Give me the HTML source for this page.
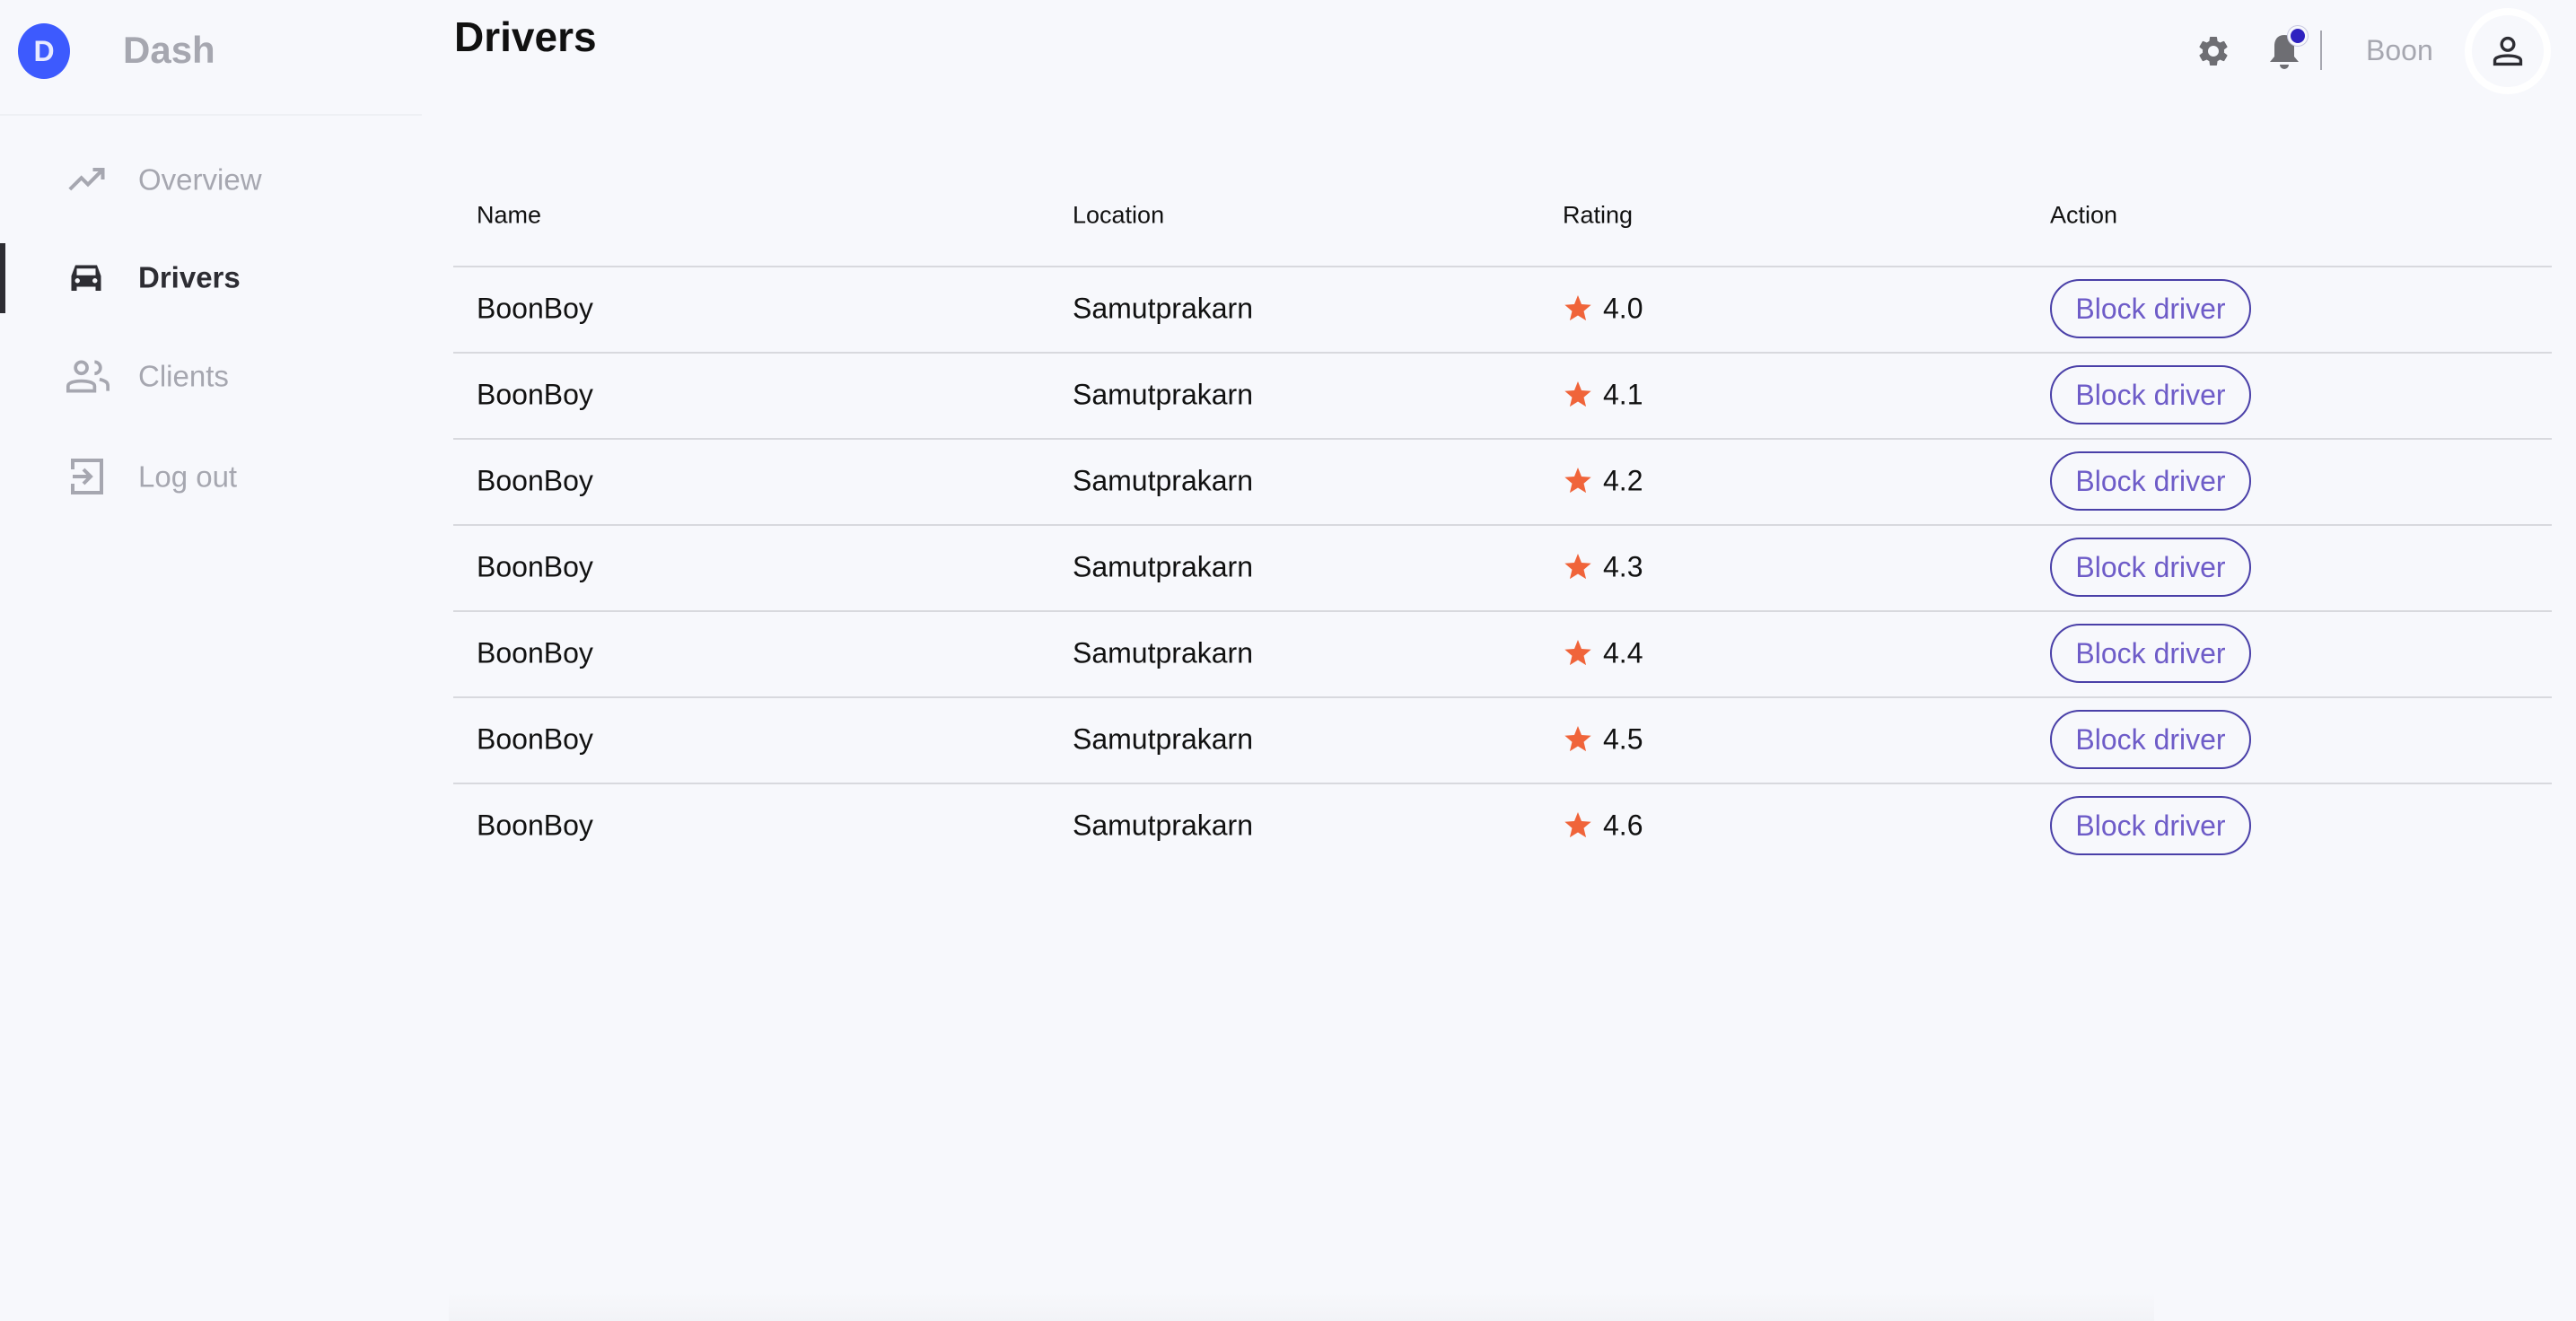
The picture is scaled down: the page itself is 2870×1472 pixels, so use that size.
<!DOCTYPE html>
<html><head><meta charset="utf-8"><style>
*{margin:0;padding:0;box-sizing:border-box}
body{width:2870px;height:1472px;background:#f7f8fc;font-family:"Liberation Sans",sans-serif;position:relative;overflow:hidden;color:#111}
.abs{position:absolute}
.nav{position:absolute;left:154px;font-size:33px;color:#a6a7b0;line-height:1;transform:translateY(-50%)}
.ic{position:absolute;left:76px;transform:translateY(-50%)}
.h{position:absolute;top:240px;font-size:27px;transform:translateY(-50%);color:#111}
.line{position:absolute;left:505px;width:2338px;height:2px;background:#d8d9de}
.cell{position:absolute;font-size:32px;transform:translateY(-50%);color:#111}
.btn{position:absolute;left:2284px;width:224px;height:66px;border:2px solid #4a40a8;border-radius:33px;color:#6e5cc8;font-size:32px;display:flex;align-items:center;justify-content:center;transform:translateY(-50%)}
.star{position:absolute;left:1742px;transform:translateY(-50%)}
</style></head><body>
<div class="abs" style="left:20px;top:26px;width:58px;height:62px;border-radius:50%;background:#3d5afe"></div>
<div class="abs" style="left:20px;top:26px;width:58px;height:62px;color:#e8eaff;font-weight:bold;font-size:32px;display:flex;align-items:center;justify-content:center">D</div>
<div class="abs" style="left:137px;top:32px;font-size:42px;font-weight:bold;color:#a6a7b0">Dash</div>
<div class="abs" style="left:0;top:127px;width:470px;height:2px;background:#eef0f4"></div>

<svg class="ic" style="top:200px" width="44" height="30" viewBox="0 0 24 16"><path d="M1 14 L8 7 L12 11 L20 3 M15 2 H21 V8" stroke="#a6a7b0" stroke-width="2.2" fill="none"/></svg>
<div class="nav" style="top:200px">Overview</div>

<div class="abs" style="left:0;top:271px;width:6px;height:78px;background:#2d2d33"></div>
<svg class="ic" style="left:78px;top:309px" width="36" height="34" viewBox="0 0 24 22"><path d="M4 2 H20 L23 10 V21 H19 V18 H5 V21 H1 V10 Z" fill="#2d2d33"/><rect x="5" y="4.5" width="14" height="5" fill="#f7f8fc"/><circle cx="5.5" cy="13.5" r="1.8" fill="#f7f8fc"/><circle cx="18.5" cy="13.5" r="1.8" fill="#f7f8fc"/></svg>
<div class="nav" style="top:309px;color:#2d2d33;font-weight:bold">Drivers</div>

<svg class="ic" style="left:74px;top:419px" width="48" height="38" viewBox="0 0 26 20"><circle cx="9" cy="5" r="3.5" stroke="#a6a7b0" stroke-width="2" fill="none"/><path d="M17 1.5 A3.5 3.5 0 0 1 17 8.5" stroke="#a6a7b0" stroke-width="2" fill="none"/><path d="M1 19 V16 C1 12 17 12 17 16 V19 Z" stroke="#a6a7b0" stroke-width="2" fill="none"/><path d="M20 12 C24 13 25 14 25 16 V19" stroke="#a6a7b0" stroke-width="2" fill="none"/></svg>
<div class="nav" style="top:419px">Clients</div>

<svg class="ic" style="left:79px;top:531px" width="36" height="40" viewBox="0 0 18 20"><path d="M1 6 V1 H17 V19 H1 V14" stroke="#a6a7b0" stroke-width="2" fill="none"/><path d="M1 10 H11 M7 6 L11 10 L7 14" stroke="#a6a7b0" stroke-width="2" fill="none"/></svg>
<div class="nav" style="top:531px">Log out</div>

<div class="abs" style="left:506px;top:14px;font-size:46px;font-weight:bold;color:#111">Drivers</div>

<svg class="abs" style="left:2446px;top:37px" width="40" height="40" viewBox="0 0 24 24"><path fill="#6e6e73" d="M19.14 12.94c.04-.3.06-.61.06-.94 0-.32-.02-.64-.07-.94l2.030-1.58a.49.49 0 0 0 .12-.61l-1.92-3.32a.488.488 0 0 0-.59-.22l-2.39.96c-.5-.38-1.03-.7-1.62-.94l-.36-2.54a.484.484 0 0 0-.48-.41h-3.84c-.24 0-.43.17-.47.41l-.36 2.54c-.59.24-1.130.57-1.62.94l-2.39-.96c-.22-.08-.47 0-.59.22L2.74 8.87c-.12.21-.08.47.12.61l2.03 1.58c-.05.3-.09.63-.09.94s.02.64.07.94l-2.03 1.58a.49.49 0 0 0-.12.61l1.92 3.32c.12.22.37.29.59.22l2.39-.96c.5.38 1.03.7 1.62.94l.36 2.54c.05.24.24.41.48.41h3.84c.24 0 .44-.17.47-.41l.36-2.54c.59-.24 1.13-.56 1.62-.94l2.39.96c.22.08.47 0 .59-.22l1.92-3.32c.12-.22.07-.47-.12-.61l-2.01-1.58zM12 15.6c-1.98 0-3.6-1.62-3.6-3.6s1.62-3.6 3.6-3.6 3.6 1.62 3.6 3.6-1.62 3.6-3.6 3.6z"/></svg>
<svg class="abs" style="left:2527px;top:37px" width="36" height="40" viewBox="0 0 18 20"><path d="M9 1 C5 1 3.5 4 3.5 7 V13 L1 16 H17 L14.5 13 V7 C14.5 4 13 1 9 1 Z" fill="#6e6e73"/><path d="M6.5 17.5 H11.5 A2.5 2.5 0 0 1 6.5 17.5 Z" fill="#6e6e73"/></svg>
<div class="abs" style="left:2549px;top:29px;width:22px;height:22px;border-radius:50%;background:#2f22c0;border:3px solid #f7f8fc;box-shadow:0 0 0 1px #c8c8e0"></div>
<div class="abs" style="left:2585px;top:34px;width:2px;height:44px;background:#a6a7b0"></div>
<div class="abs" style="left:2636px;top:38px;font-size:32px;color:#a6a7b0">Boon</div>
<div class="abs" style="left:2746px;top:9px;width:96px;height:96px;border-radius:50%;border:8px solid #fff"></div>
<svg class="abs" style="left:2777px;top:40px" width="34" height="34" viewBox="0 0 20 20"><circle cx="10" cy="5.5" r="4" stroke="#2d2d33" stroke-width="2" fill="none"/><path d="M1.5 18.5 V16 C1.5 12 18.5 12 18.5 16 V18.5 Z" stroke="#2d2d33" stroke-width="2" fill="none"/></svg>

<div class="h" style="left:531px">Name</div>
<div class="h" style="left:1195px">Location</div>
<div class="h" style="left:1741px">Rating</div>
<div class="h" style="left:2284px">Action</div>
<div class="line" style="top:296px"></div>

<div class="line" style="top:392px"></div>
<div class="line" style="top:488px"></div>
<div class="line" style="top:584px"></div>
<div class="line" style="top:680px"></div>
<div class="line" style="top:776px"></div>
<div class="line" style="top:872px"></div>

<div class="cell" style="left:531px;top:344px">BoonBoy</div><div class="cell" style="left:1195px;top:344px">Samutprakarn</div><svg class="star" style="top:343px" width="32" height="32" viewBox="0 0 24 24"><path d="M12 1.5l3 7.5 8 .6-6.1 5.2 1.9 7.8L12 18.4 5.2 22.6l1.9-7.8L1 9.6l8-.6z" fill="#f0643a"/></svg><div class="cell" style="left:1786px;top:344px">4.0</div><div class="btn" style="top:344px">Block driver</div>
<div class="cell" style="left:531px;top:440px">BoonBoy</div><div class="cell" style="left:1195px;top:440px">Samutprakarn</div><svg class="star" style="top:439px" width="32" height="32" viewBox="0 0 24 24"><path d="M12 1.5l3 7.5 8 .6-6.1 5.2 1.9 7.8L12 18.4 5.2 22.6l1.9-7.8L1 9.6l8-.6z" fill="#f0643a"/></svg><div class="cell" style="left:1786px;top:440px">4.1</div><div class="btn" style="top:440px">Block driver</div>
<div class="cell" style="left:531px;top:536px">BoonBoy</div><div class="cell" style="left:1195px;top:536px">Samutprakarn</div><svg class="star" style="top:535px" width="32" height="32" viewBox="0 0 24 24"><path d="M12 1.5l3 7.5 8 .6-6.1 5.2 1.9 7.8L12 18.4 5.2 22.6l1.9-7.8L1 9.6l8-.6z" fill="#f0643a"/></svg><div class="cell" style="left:1786px;top:536px">4.2</div><div class="btn" style="top:536px">Block driver</div>
<div class="cell" style="left:531px;top:632px">BoonBoy</div><div class="cell" style="left:1195px;top:632px">Samutprakarn</div><svg class="star" style="top:631px" width="32" height="32" viewBox="0 0 24 24"><path d="M12 1.5l3 7.5 8 .6-6.1 5.2 1.9 7.8L12 18.4 5.2 22.6l1.9-7.8L1 9.6l8-.6z" fill="#f0643a"/></svg><div class="cell" style="left:1786px;top:632px">4.3</div><div class="btn" style="top:632px">Block driver</div>
<div class="cell" style="left:531px;top:728px">BoonBoy</div><div class="cell" style="left:1195px;top:728px">Samutprakarn</div><svg class="star" style="top:727px" width="32" height="32" viewBox="0 0 24 24"><path d="M12 1.5l3 7.5 8 .6-6.1 5.2 1.9 7.8L12 18.4 5.2 22.6l1.9-7.8L1 9.6l8-.6z" fill="#f0643a"/></svg><div class="cell" style="left:1786px;top:728px">4.4</div><div class="btn" style="top:728px">Block driver</div>
<div class="cell" style="left:531px;top:824px">BoonBoy</div><div class="cell" style="left:1195px;top:824px">Samutprakarn</div><svg class="star" style="top:823px" width="32" height="32" viewBox="0 0 24 24"><path d="M12 1.5l3 7.5 8 .6-6.1 5.2 1.9 7.8L12 18.4 5.2 22.6l1.9-7.8L1 9.6l8-.6z" fill="#f0643a"/></svg><div class="cell" style="left:1786px;top:824px">4.5</div><div class="btn" style="top:824px">Block driver</div>
<div class="cell" style="left:531px;top:920px">BoonBoy</div><div class="cell" style="left:1195px;top:920px">Samutprakarn</div><svg class="star" style="top:919px" width="32" height="32" viewBox="0 0 24 24"><path d="M12 1.5l3 7.5 8 .6-6.1 5.2 1.9 7.8L12 18.4 5.2 22.6l1.9-7.8L1 9.6l8-.6z" fill="#f0643a"/></svg><div class="cell" style="left:1786px;top:920px">4.6</div><div class="btn" style="top:920px">Block driver</div>

<div class="abs" style="left:500px;top:1440px;width:1900px;height:32px;background:linear-gradient(#f7f8fc,#f2f3f7)"></div>
</body></html>
